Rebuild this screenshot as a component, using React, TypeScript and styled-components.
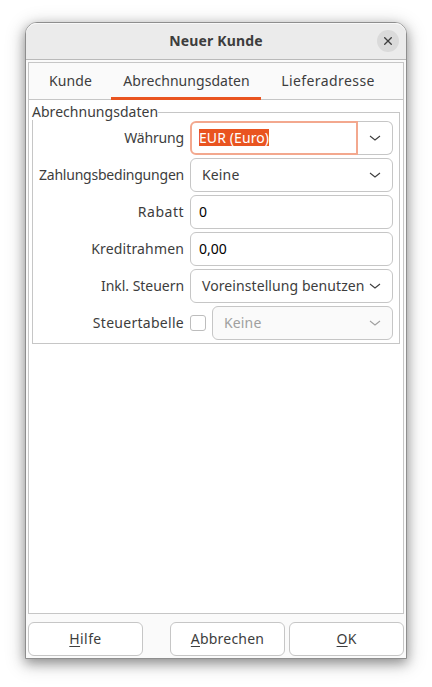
import React from 'react';
import styled, { createGlobalStyle, css } from 'styled-components';

const line = '#c6c6c6';
const orange = '#e95420';
const ink = '#3d3d3d';

const Global = createGlobalStyle`
  * { box-sizing: border-box; }
  body {
    margin: 0;
    background: #fff;
    color: ${ink};
    font: 14px/20px "Noto Sans", "Open Sans", sans-serif;
    overflow: hidden;
  }
`;

const Desktop = styled.main`
  height: 687px;
  padding: 22px 25px 28px;
`;

const Window = styled.section`
  width: 382px;
  height: 637px;
  display: flex;
  flex-direction: column;
  border: 1px solid #8e8e8e;
  border-radius: 12px 12px 0 0;
  background: #fafafa;
  box-shadow: 0 4px 12px rgba(0, 0, 0, 0.36), 0 4px 20px 2px rgba(0, 0, 0, 0.16);
`;

const TitleBar = styled.header`
  height: 37px;
  flex: none;
  display: grid;
  grid-template-columns: 36px 1fr 36px;
  align-items: center;
  justify-items: center;
  border-bottom: 1px solid #b9b9b9;
  border-radius: 11px 11px 0 0;
  background: #ebebeb;
  box-shadow: inset 0 1px #f8f8f8;
`;

const Title = styled.h1`
  grid-column: 2;
  margin: 0;
  font-size: 14px;
  font-weight: 700;
  letter-spacing: 0.15px;
`;

const CloseButton = styled.button`
  width: 22px;
  height: 22px;
  display: grid;
  place-items: center;
  border: 0;
  border-radius: 50%;
  padding: 0;
  background: #dadada;
  color: ${ink};
`;

const Notebook = styled.div`
  height: 552px;
  margin: 2px 2px 0;
  flex: none;
  border: 1px solid ${line};
  background: #fff;
`;

const TabBar = styled.nav`
  height: 37px;
  display: flex;
  border-bottom: 1px solid ${line};
  background: #fafafa;
`;

const Tab = styled.button<{ $active?: boolean; $width: number }>`
  width: ${(p) => p.$width}px;
  height: 37px;
  border: 0;
  border-bottom: 3px solid ${(p) => (p.$active ? orange : 'transparent')};
  padding: 2px 0 0 1px;
  background: transparent;
  color: inherit;
  font: inherit;
`;

const Text = styled.span<{ $track?: number }>`
  letter-spacing: ${(p) => p.$track ?? 0}px;
  white-space: nowrap;
`;

const Group = styled.fieldset`
  min-width: 0;
  height: 239px;
  margin: 5px 3px 0;
  border: 1px solid ${line};
  padding: 0 6px 0 5px;
`;

const Legend = styled.legend`
  height: 15px;
  margin-left: -6px;
  padding: 0;
  line-height: 13px;
`;

const Form = styled.div`
  display: grid;
  grid-auto-rows: 34px;
  row-gap: 3px;
  margin-top: 1px;
`;

const Row = styled.div`
  display: grid;
  grid-template-columns: 146px 203px;
  column-gap: 6px;
  align-items: center;
`;

const Label = styled.label<{ $track?: number }>`
  justify-self: end;
  letter-spacing: ${(p) => p.$track ?? 0}px;
  white-space: nowrap;
`;

const field = css`
  height: 34px;
  border: 1px solid ${line};
  border-radius: 6px;
  background: #fff;
  display: flex;
  align-items: center;
`;

const Combo = styled.div`
  display: flex;
`;

const FocusedEntry = styled.div`
  ${field}
  width: 168px;
  border: 2px solid #f3a88e;
  border-radius: 6px 0 0 6px;
  padding: 0 0 1px 7px;
`;

const Selection = styled.span`
  height: 17px;
  background: ${orange};
  color: #fff;
  line-height: 17px;
  letter-spacing: 0.09px;
  white-space: nowrap;
`;

const ComboButton = styled.button`
  ${field}
  width: 35px;
  border-left: 0;
  border-radius: 0 6px 6px 0;
  justify-content: center;
  padding: 0;
  color: ${ink};
`;

const Entry = styled.div`
  ${field}
  padding-left: 8px;
  color: #000;
`;

const Select = styled.div<{ $disabled?: boolean }>`
  ${field}
  flex: 1;
  justify-content: space-between;
  padding: 0 11px;
  ${(p) =>
    p.$disabled &&
    css`
      background: #fafafa;
      color: #a0a0a0;
    `}
`;

const CheckedSelect = styled.div`
  display: flex;
  align-items: center;
  gap: 6px;
`;

const CheckBox = styled.span`
  width: 16px;
  height: 16px;
  border: 1px solid #bdbdbd;
  border-radius: 3px;
  background: #fff;
`;

const Actions = styled.footer`
  display: flex;
  gap: 4px;
  padding: 8px 2px 0;
`;

const ActionButton = styled.button<{ $pushed?: boolean }>`
  ${field}
  width: 115px;
  justify-content: center;
  margin-left: ${(p) => (p.$pushed ? 'auto' : '0')};
  padding: 0;
  color: inherit;
  font: inherit;
`;

const Mnemonic = styled.span`
  text-decoration: underline;
  text-decoration-thickness: 1px;
  text-underline-offset: 2px;
  text-decoration-skip-ink: none;
`;

const Chevron = () => (
  <svg width="12" height="8" viewBox="0 0 12 8" fill="none" stroke="currentColor" strokeWidth="1.1">
    <path d="M1 2l5 4 5-4" />
  </svg>
);

export default function App() {
  return (
    <>
      <Global />
      <Desktop>
        <Window>
          <TitleBar>
            <Title>Neuer Kunde</Title>
            <CloseButton aria-label="Schließen">
              <svg width="8" height="8" viewBox="0 0 8 8" stroke="currentColor" strokeWidth="1.3">
                <path d="M.3.3l7.4 7.4M7.7.3L.3 7.7" />
              </svg>
            </CloseButton>
          </TitleBar>
          <Notebook>
            <TabBar>
              <Tab $width={82}><Text $track={0.1}>Kunde</Text></Tab>
              <Tab $width={150} $active><Text $track={0.05}>Abrechnungsdaten</Text></Tab>
              <Tab $width={133}><Text $track={0.42}>Lieferadresse</Text></Tab>
            </TabBar>
            <Group>
              <Legend><Text $track={0.03}>Abrechnungsdaten</Text></Legend>
              <Form>
                <Row>
                  <Label $track={-0.18}>Währung</Label>
                  <Combo>
                    <FocusedEntry><Selection>EUR (Euro)</Selection></FocusedEntry>
                    <ComboButton aria-label="Währung auswählen"><Chevron /></ComboButton>
                  </Combo>
                </Row>
                <Row>
                  <Label $track={-0.22}>Zahlungsbedingungen</Label>
                  <Select><Text $track={0.15}>Keine</Text><Chevron /></Select>
                </Row>
                <Row>
                  <Label $track={0.5}>Rabatt</Label>
                  <Entry>0</Entry>
                </Row>
                <Row>
                  <Label $track={0.15}>Kreditrahmen</Label>
                  <Entry>0,00</Entry>
                </Row>
                <Row>
                  <Label $track={-0.04}>Inkl. Steuern</Label>
                  <Select><Text $track={0.08}>Voreinstellung benutzen</Text><Chevron /></Select>
                </Row>
                <Row>
                  <Label $track={0.28}>Steuertabelle</Label>
                  <CheckedSelect>
                    <CheckBox role="checkbox" aria-checked="false" />
                    <Select $disabled><Text $track={0.15}>Keine</Text><Chevron /></Select>
                  </CheckedSelect>
                </Row>
              </Form>
            </Group>
          </Notebook>
          <Actions>
            <ActionButton><Text $track={0.4}><Mnemonic>H</Mnemonic>ilfe</Text></ActionButton>
            <ActionButton $pushed><Text $track={0.2}><Mnemonic>A</Mnemonic>bbrechen</Text></ActionButton>
            <ActionButton><Text $track={0.1}><Mnemonic>O</Mnemonic>K</Text></ActionButton>
          </Actions>
        </Window>
      </Desktop>
    </>
  );
}
